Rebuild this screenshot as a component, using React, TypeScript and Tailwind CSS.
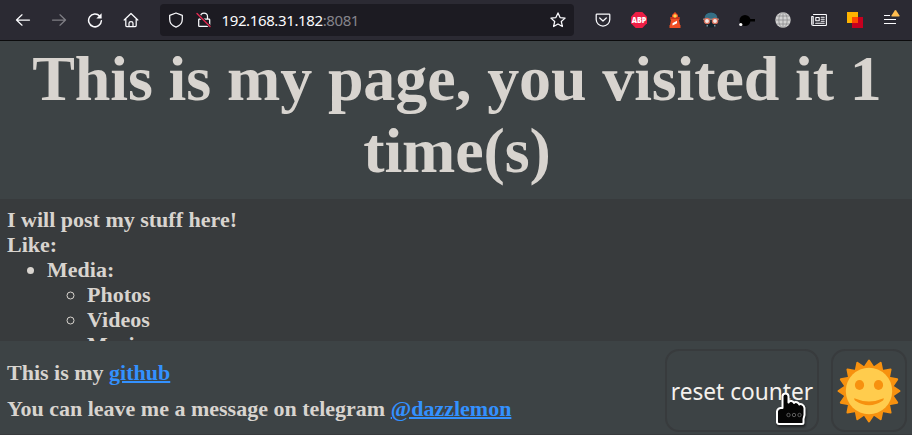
import type { ReactNode } from "react";

function Ico({ children, size = 16 }: { children: ReactNode; size?: number }) {
  return (
    <svg
      width={size}
      height={size}
      viewBox="0 0 16 16"
      fill="none"
      stroke="#fbfbfe"
      strokeWidth="1.25"
      strokeLinecap="round"
      strokeLinejoin="round"
      className="shrink-0"
    >
      {children}
    </svg>
  );
}

function Toolbar() {
  return (
    <header className="flex h-[41px] shrink-0 items-center border-b border-[#0c0c0d] bg-[#2b2a33] pl-[15px]">
      <div className="flex w-[145px] gap-[20px]">
        <Ico>
          <path d="M14.5 8H1.5M7 2.8L1.5 8L7 13.2" />
        </Ico>
        <div className="opacity-40">
          <Ico>
            <path d="M1.5 8h13M9 2.8L14.5 8L9 13.2" />
          </Ico>
        </div>
        <Ico>
          <path d="M12.8 4.2A6.4 6.4 0 1 0 14.4 8.8" strokeWidth="1.5" />
          <path d="M14.6 1.2v5.3H9.3z" fill="#fbfbfe" stroke="none" />
        </Ico>
        <Ico>
          <path d="M1.2 8L8 1.5L14.8 8M2.8 7v6.5q0 1 1 1h8.4q1 0 1-1V7M6 14.2v-3q0-1.6 2-1.6t2 1.6v3" />
        </Ico>
      </div>
      <div className="flex h-[32px] w-[414px] items-center rounded-[4px] bg-[#1c1b22] pl-[8px] pr-[8px]">
        <Ico>
          <path d="M8 1L14.3 3.3V7.3C14.3 11 11.5 14 8 15.1C4.5 14 1.7 11 1.7 7.3V3.3Z" />
        </Ico>
        <div className="ml-[12px] flex">
          <Ico>
            <path d="M4.5 7V4.5a3.5 3.5 0 0 1 7 0V7M3.5 7h9.500q.7 0 .7.700v6q0 .7-.7.700H3.400q-.7 0-.7-.700V7.700q0-.7.700-.7" />
            <path d="M1 1.500L14 14.500" stroke="#1c1b22" strokeWidth="3" />
            <path d="M1 1.500L14 14.500" stroke="#e22850" strokeWidth="1.400" />
          </Ico>
        </div>
        <span className="ml-[9.5px] w-[140px] whitespace-nowrap font-['Noto_Sans',sans-serif] text-[15px] font-normal leading-5 tracking-[-0.38px] text-[#fbfbfe]">
          192.168.31.182<span className="text-[#85848b]">:8081</span>
        </span>
        <div className="ml-auto">
          <Ico>
            <path d="M8 .9l2.100 4.700 5 .5-3.800 3.400 1.100 5L8 12l-4.400 2.500 1.100-5L.9 6.100l5-.5z" />
          </Ico>
        </div>
      </div>
      <div className="ml-[21px] flex items-center gap-[20px]">
        <Ico>
          <path d="M2 2h12q.8 0 .8.800V7.500a6.800 6.500 0 0 1-13.600 0V2.800Q1.200 2 2 2zM4.700 6L8 9l3.300-3" />
        </Ico>
        <svg width="16" height="16" viewBox="0 0 16 16" className="shrink-0">
          <path d="M4.700 0h6.600L16 4.700v6.600L11.300 16H4.700L0 11.300V4.700z" fill="#ed1e45" />
          <text x="8" y="10.900" fill="#fff" fontSize="8" fontWeight="800" textAnchor="middle" fontFamily="Open Sans, sans-serif" textLength="14.500" lengthAdjust="spacingAndGlyphs">ABP</text>
        </svg>
        <svg width="16" height="16" viewBox="0 0 16 16" className="shrink-0">
          <path d="M5 3L8 0l3 3v2h1.500v3H12l1 5h.500v3h-11v-3H3l1-5h-.500V5H5z" fill="#f04e23" />
          <path d="M3.700 5h8.600v2H3.700z" fill="#c9341c" />
          <circle cx="8" cy="4" r="1.800" fill="#ffd24d" />
          <path d="M5.500 11.200l4.500-2.400v2.400l-4.500 2.400z" fill="#fff" />
        </svg>
        <svg width="16" height="16" viewBox="0 0 16 16" className="shrink-0">
          <path d="M2 6Q2 .5 8 .5T14 6v6q-1 3.500-6 3.500T2 12z" fill="#14222b" />
          <path d="M1.500 7Q1.500.5 8 .5T14.500 7z" fill="#356f86" />
          <path d="M0 6.500h16V8H0z" fill="#8c8180" />
          <circle cx="4" cy="9" r="2.600" fill="#f1e9e6" stroke="#d56c58" strokeWidth="1.300" />
          <circle cx="12" cy="9" r="2.600" fill="#f1e9e6" stroke="#d56c58" strokeWidth="1.300" />
          <path d="M3.500 13h1.500v1.500H3.500zM11 13h1.500v1.500H11z" fill="#77939f" />
        </svg>
        <svg width="16" height="16" viewBox="0 0 16 16" className="shrink-0">
          <circle cx="6" cy="8.500" r="5.500" fill="#000" />
          <path d="M10 7h6v2.500h-6z" fill="#000" />
          <circle cx="1.800" cy="12.500" r="1.600" fill="#fff" />
        </svg>
        <svg width="16" height="16" viewBox="0 0 16 16" fill="none" className="shrink-0">
          <circle cx="8" cy="8" r="7.700" fill="#d2d2d2" />
          <path d="M8 0v16M0 8h16M1.500 4h13M1.500 12h13" stroke="#8b8b8d" strokeWidth=".8" />
          <ellipse cx="8" cy="8" rx="4.200" ry="7.700" stroke="#8b8b8d" strokeWidth=".8" />
        </svg>
        <Ico>
          <path d="M2.500 2.500h12.300q.6 0 .6.600v9.800q0 .6-.6.600H2.200q-1.500 0-1.500-1.500V4.500h1.500v7.500M4.800 5.500h3.400v3.200H4.800zM10.200 5.200h3M10.200 7.200h3M10.200 9.200h3M4.700 11.200h8.500" strokeWidth="1.100" />
        </Ico>
        <svg width="16" height="16" viewBox="0 0 16 16" className="shrink-0">
          <path d="M0 0h11v11H0z" fill="#ffb300" />
          <path d="M5 5h11v11H5z" fill="#c6001f" />
          <path d="M5 5h6v6H5z" fill="#ff4b00" />
        </svg>
        <svg width="18" height="20" viewBox="0 0 18 20" className="shrink-0">
          <path d="M1 5.500h6M1 9.500h12M1 13.500h12" stroke="#fbfbfe" strokeWidth="1.200" />
          <path d="M11.800.5q.7-1 1.400 0l3.300 5q.5 1-.5 1H9q-1 0-.5-1z" fill="#ffbd4f" />
        </svg>
      </div>
    </header>
  );
}

function Sun() {
  const points = Array.from({ length: 32 }, (_, i) => {
    const r = i % 2 ? 24 : 30.5;
    const a = (i * Math.PI) / 16;
    return `${(32 + r * Math.sin(a)).toFixed(2)},${(32 - r * Math.cos(a)).toFixed(2)}`;
  }).join(" ");
  return (
    <svg width="64" height="64" viewBox="0 0 64 64">
      <polygon points={points} fill="#f7910f" stroke="#f7910f" strokeWidth="2" strokeLinejoin="round" />
      <circle cx="32" cy="32" r="23.200" fill="#ffcc4d" />
      <ellipse cx="22.500" cy="26" rx="4.600" ry="5" fill="#f7910f" />
      <ellipse cx="41.500" cy="26" rx="4.600" ry="5" fill="#f7910f" />
      <path d="M18 39.500Q32 45.500 46 39.500C47 38.700 47 40 46 41.500Q32 51 18 41.500C17 40 17 38.700 18 39.500z" fill="#f7910f" />
    </svg>
  );
}

function HandPointer() {
  return (
    <svg width="32" height="36" viewBox="0 0 32 36" className="absolute left-[108px] top-[40px] drop-shadow-[1px_2px_1px_rgba(0,0,0,0.5)]">
      <path
        d="M7.500 5Q8 2.500 10.500 2.500T13.500 5v6.500q1-2 3-1.500t2.500 2q1-1.500 3-.7t2.300 2.300q1.200-1 3 0T29.500 17v7l-1 4v3.500q0 1.500-1.500 1.500H4q-1.500 0-2-1.500v-11q.3-3 3.500-3.500h2z"
        fill="#050505"
        stroke="#fff"
        strokeWidth="2"
        strokeLinejoin="round"
      />
      <g fill="none" stroke="#707070" strokeWidth=".8">
        <circle cx="13.500" cy="24" r="1.700" />
        <circle cx="19" cy="24" r="1.700" />
        <circle cx="24.500" cy="24" r="1.700" />
      </g>
    </svg>
  );
}

export default function App() {
  return (
    <div className="flex h-[435px] w-[912px] flex-col overflow-hidden bg-[#3d4345] font-['Liberation_Serif',serif] text-[22px] font-bold leading-[25px] text-[#d8d4cf]">
      <Toolbar />
      <h1 className="h-[158px] shrink-0 pl-[2px] pt-[2px] text-center text-[64px] leading-[72px] tracking-[-0.12px]">
        This is my page, you visited it 1<br />time(s)
      </h1>
      <main className="h-[142px] shrink-0 overflow-hidden bg-[#383b3d] pl-[7px] pt-[8px]">
        <p>I will post my stuff here!</p>
        <p>Like:</p>
        <ul className="list-disc pl-[40px]">
          <li>
            Media:
            <ul className="list-[circle] pl-[40px] marker:font-normal">
              <li>Photos</li>
              <li>Videos</li>
              <li>Music</li>
            </ul>
          </li>
        </ul>
      </main>
      <footer className="flex h-[94px] shrink-0 border-b border-[#383b3d] pl-[7px]">
        <div className="flex flex-1 flex-col gap-[11px] pt-[19px]">
          <p>This is my <a className="text-[#3391ff] underline decoration-2">github</a></p>
          <p>You can leave me a message on telegram <a className="text-[#3391ff] underline decoration-2">@dazzlemon</a></p>
        </div>
        <div className="flex gap-[12px] pr-[5px] pt-[8px] font-['Noto_Sans',sans-serif] font-normal">
          <button className="relative flex h-[83px] w-[154px] items-center justify-center whitespace-nowrap rounded-[14px] border-2 border-[#383b3d] text-[22.7px] text-[#f4f1ed]">
            <span className="pt-[2px]">reset counter</span>
            <HandPointer />
          </button>
          <button className="flex h-[83px] w-[76px] items-center justify-center rounded-[14px] border-2 border-[#383b3d]">
            <Sun />
          </button>
        </div>
      </footer>
    </div>
  );
}
